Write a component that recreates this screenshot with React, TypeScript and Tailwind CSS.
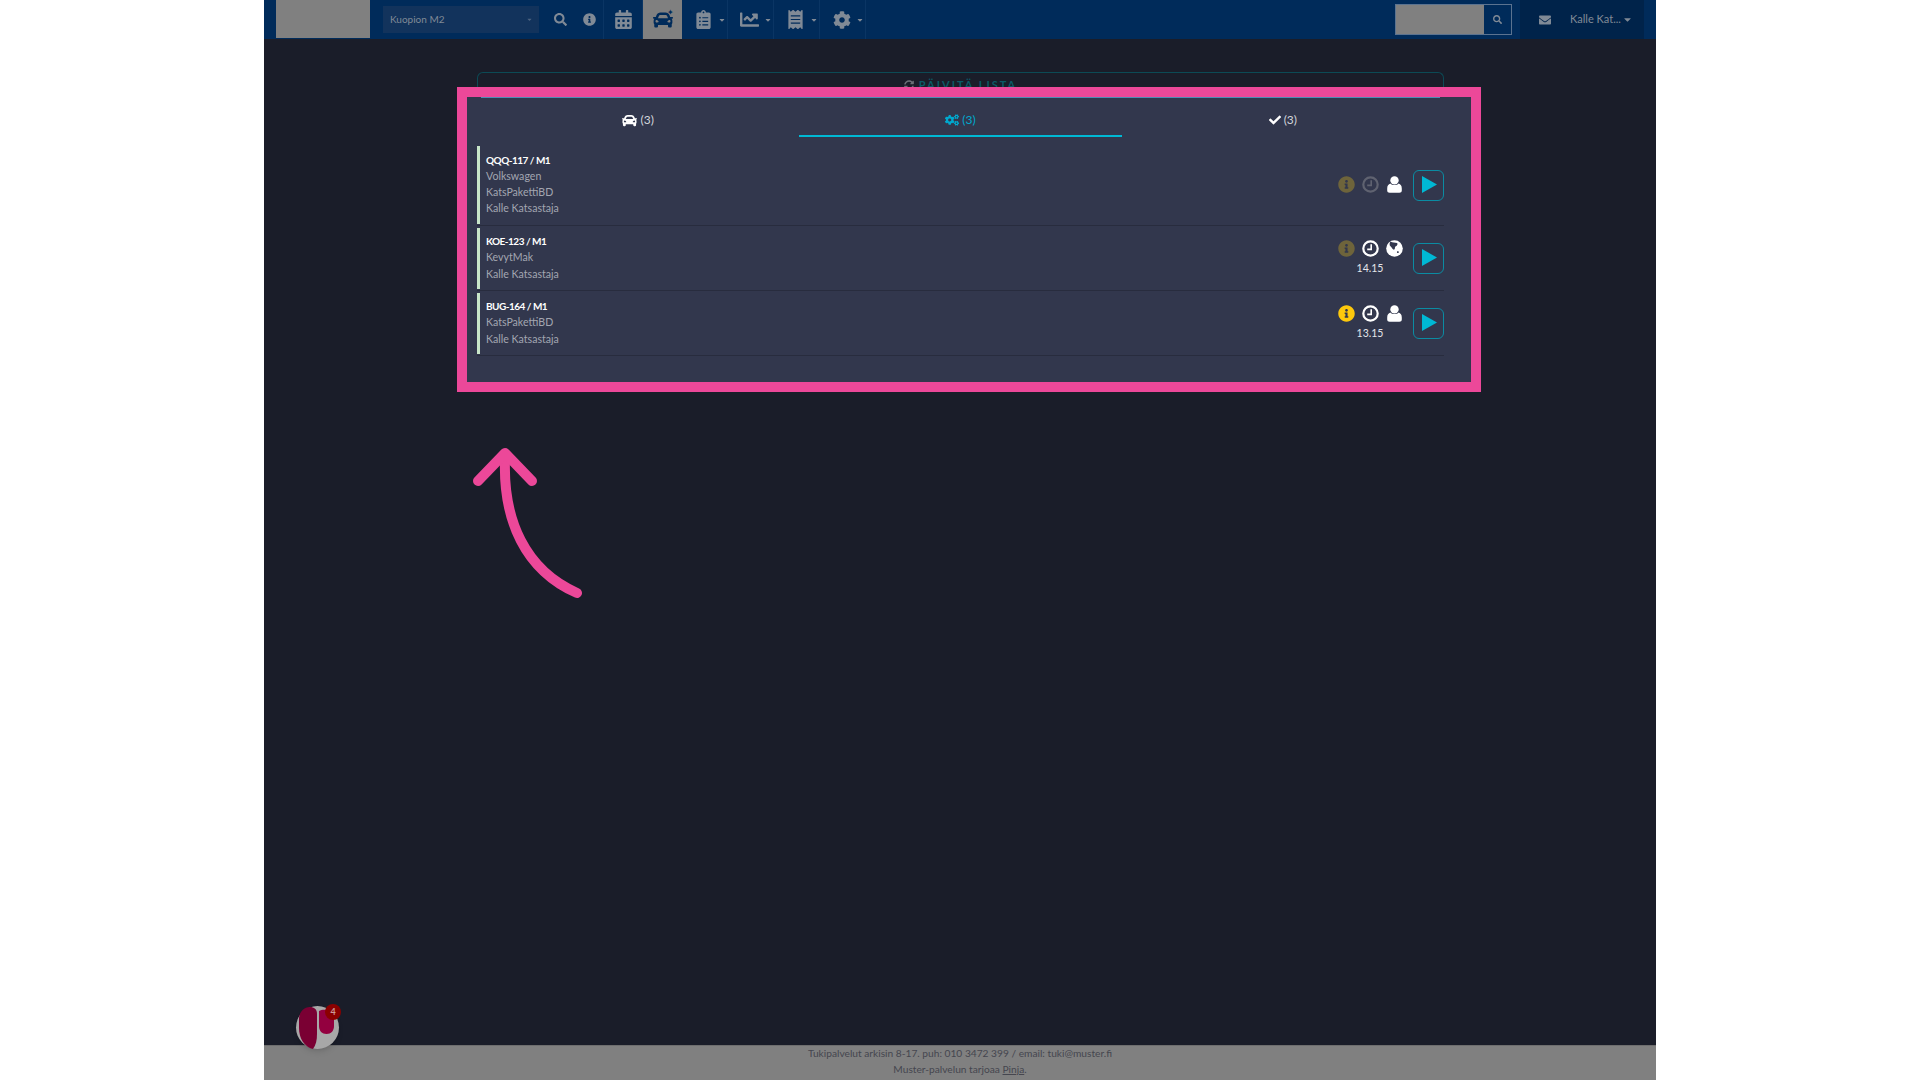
import { FaCalendarAlt, FaCar, FaCaretDown, FaChartLine, FaCheck, FaClipboardList, FaCog, FaCogs, FaEnvelope, FaInfoCircle, FaReceipt, FaSearch, FaSyncAlt } from "react-icons/fa"

const font = { fontFamily: "Lato, 'Noto Sans', sans-serif" }

type Job = {
  plate: string
  lines: string[]
  infoOn: boolean
  clockOn: boolean
  time?: string
  globe?: boolean
}

const jobs: Job[] = [
  { plate: "QQQ-117 / M1", lines: ["Volkswagen", "KatsPakettiBD", "Kalle Katsastaja"], infoOn: false, clockOn: false },
  { plate: "KOE-123 / M1", lines: ["KevytMak", "Kalle Katsastaja"], infoOn: false, clockOn: true, time: "14.15", globe: true },
  { plate: "BUG-164 / M1", lines: ["KatsPakettiBD", "Kalle Katsastaja"], infoOn: true, clockOn: true, time: "13.15" },
]

function NavDrop({ children }: { children: React.ReactNode }) {
  return (
    <div className="flex h-full w-[46px] items-center border-r border-[#0a3564] pl-[12px] text-[#808a96]">
      <span className="flex w-[19px] justify-center">{children}</span>
      <FaCaretDown className="ml-[5px] text-[8px]" />
    </div>
  )
}

function ClockIcon({ on }: { on: boolean }) {
  return (
    <svg className={on ? "h-[17px] w-[17px] text-white" : "h-[17px] w-[17px] text-[#5f6270]"} viewBox="0 0 17 17" fill="none" stroke="currentColor">
      <circle cx="8.5" cy="8.5" r="7.2" strokeWidth="2.2" />
      <path d="M9.2 4.2 V9.4 H5.2" strokeWidth="1.6" />
    </svg>
  )
}

function UserIcon() {
  return (
    <svg className="h-[17px] w-[15px] text-white" viewBox="0 0 15 17" fill="currentColor">
      <circle cx="7.5" cy="4.4" r="4.2" />
      <path d="M3.4 7.6 C5 9.6 10 9.6 11.6 7.6 C13.6 8.2 14.8 9.8 14.8 12.4 V14.6 C14.8 16 13.8 16.8 12.4 16.8 H2.6 C1.2 16.8 0.2 16 0.2 14.6 V12.4 C0.2 9.8 1.4 8.2 3.4 7.6 Z" />
    </svg>
  )
}

function GlobeIcon() {
  return (
    <svg className="h-[17px] w-[17px]" viewBox="0 0 17 17">
      <circle cx="8.5" cy="8.5" r="8.3" fill="#ffffff" />
      <path d="M4.5 1.6 C6.5 3 9 2.6 11 3 C12.4 4 10.6 6.4 9.2 6.6 C8.6 8 9.4 9.6 7.8 9.8 C6 8.8 5.6 6.8 3.8 5.4 C3.4 4 3.8 2.6 4.5 1.6 Z" fill="#32374d" />
      <path d="M11 11.4 C12.4 10.8 13.2 11.6 12.6 12.8 C11.8 13.6 10.6 12.8 11 11.4 Z" fill="#32374d" />
    </svg>
  )
}

function Header() {
  return (
    <header className="flex h-[39px] shrink-0 items-center bg-[#002b5a] text-[#808a96]">
      <div className="ml-[12px] h-[38px] w-[94px] self-start bg-[#808080]" />
      <div className="ml-[13px] flex h-[27px] w-[156px] items-center justify-between bg-[#12335c] pl-[7px] pr-[6px] text-[10px] text-[#808a96]">
        <span>Kuopion M2</span>
        <FaCaretDown className="text-[7px] text-[#4e6480]" />
      </div>
      <FaSearch className="ml-[15px] text-[13px]" />
      <FaInfoCircle className="ml-[16px] text-[13px]" />
      <div className="ml-[7px] flex h-full w-[40px] items-center justify-center border-x border-[#0a3564]">
        <FaCalendarAlt className="text-[19px]" />
      </div>
      <div className="relative flex h-full w-[39px] items-center justify-center bg-[#808080] text-[#002b5a]">
        <FaCar className="text-[20px]" />
        <span className="absolute right-[8px] top-[8px] text-[8px] leading-none">✦</span>
      </div>
      <NavDrop><FaClipboardList className="text-[19px]" /></NavDrop>
      <NavDrop><FaChartLine className="text-[19px]" /></NavDrop>
      <NavDrop><FaReceipt className="text-[19px]" /></NavDrop>
      <NavDrop><FaCog className="text-[18px]" /></NavDrop>
      <div className="flex-1" />
      <div className="flex h-[31px] w-[117px] border border-[#5b7390]">
        <div className="flex-1 bg-[#808080]" />
        <div className="flex w-[27px] items-center justify-center">
          <FaSearch className="text-[9px]" />
        </div>
      </div>
      <div className="ml-[8px] flex h-full w-[124px] items-center bg-[#00234a] pl-[19px] text-[11px]">
        <FaEnvelope className="text-[12px]" />
        <span className="ml-[19px]">Kalle Kat...</span>
        <FaCaretDown className="ml-[1px] text-[11px]" />
      </div>
      <div className="w-[12px] bg-[#00305f]" />
    </header>
  )
}

function JobRow({ job, first }: { job: Job; first: boolean }) {
  return (
    <div className="mb-[2px] border-b border-[#282c3e] pb-[1px]">
      <div className={first ? "flex items-center justify-between border-l-[3px] border-[#c8e6c9] py-[6.5px] pl-[6px]" : "flex items-center justify-between border-l-[3px] border-[#c8e6c9] py-[6px] pl-[6px]"}>
        <div className="-mt-[1px] mb-[1px] text-[10.6px] leading-[16.3px] text-[#a3a6b1]">
          <div className="text-[10px] font-bold tracking-[-0.5px] text-white">{job.plate}</div>
          {job.lines.map((l, i) => (
            <div key={i}>{l}</div>
          ))}
        </div>
        <div className="flex items-center">
          <div className="mb-[2px] grid grid-cols-[24px_24px_24px] items-center justify-items-center text-white">
            <FaInfoCircle className={job.infoOn ? "text-[17px] text-[#fdc80c]" : "text-[17px] text-[#6e643b]"} />
            <ClockIcon on={job.clockOn} />
            {job.globe ? <GlobeIcon /> : <UserIcon />}
            {job.time && (
              <div className="col-start-2 mt-[4px] text-[10.5px] leading-[14px] text-[#e4e6ea]">{job.time}</div>
            )}
          </div>
          <button className="ml-[7px] flex h-[31px] w-[31px] items-center justify-center rounded-[6px] border border-[#0b8ca3]">
            <svg className="mb-[2px] ml-[1px] h-[17px] w-[15px]" viewBox="0 0 15 17">
              <polygon points="0,0 15,8.5 0,17" fill="#00b8d4" />
            </svg>
          </button>
        </div>
      </div>
    </div>
  )
}

export default function App() {
  return (
    <div className="h-screen bg-white" style={font}>
      <div className="relative mx-auto flex h-full w-[1392px] flex-col overflow-hidden bg-[#1a1d29]">
        <Header />
        <main className="flex-1">
          <div className="ml-[213px] mt-[33px] flex h-[30px] w-[967px] justify-center rounded-t-[6px] border border-b-0 border-[#0c4a55] pt-[4px] text-[11px] font-bold tracking-[2px] text-[#0b5a66]">
            <span className="flex h-[16px] items-center gap-[5px]">
              <FaSyncAlt className="text-[10px] text-[#6b6e76]" />
              PÄIVITÄ LISTA
            </span>
          </div>
          <section className="relative ml-[193px] mt-[-15px] h-[305px] w-[1024px] border-[10px] border-[#ec4899] bg-[#32374d] pl-[10px] pr-[27px]">
            <div className="mx-[4px] h-px bg-[#4f8db5]" />
            <div className="grid h-[39px] grid-cols-3 text-[12px] text-[#d3d5da]">
              <div className="flex items-center justify-center gap-[3px] pt-[5px]">
                <FaCar className="text-[15px] text-white" /> (3)
              </div>
              <div className="flex items-center justify-center gap-[3px] border-b-2 border-[#00b8d4] pt-[7px] text-[#00a9cf]">
                <FaCogs className="text-[14px]" /> (3)
              </div>
              <div className="flex items-center justify-center gap-[3px] pt-[5px]">
                <FaCheck className="text-[12px] text-white" /> (3)
              </div>
            </div>
            <div className="mt-[9px]">
              {jobs.map((job, i) => (
                <JobRow key={job.plate} job={job} first={i === 0} />
              ))}
            </div>
          </section>
        </main>
        <footer className="h-[35px] shrink-0 border-t border-[#6e6e6e] bg-[#808080] text-center text-[10.2px] leading-[15.5px] text-[#45464f]">
          <div>Tukipalvelut arkisin 8-17. puh: 010 3472 399 / email: tuki@muster.fi</div>
          <div>
            Muster-palvelun tarjoaa <span className="underline">Pinja</span>.
          </div>
        </footer>

        {/* annotation arrow */}
        <svg className="absolute left-[206px] top-[440px] h-[165px] w-[120px]" viewBox="0 0 120 165" fill="none" stroke="#ec4899" strokeWidth="10" strokeLinecap="round" strokeLinejoin="round">
          <path d="M35 20 C33 80 55 130 107 153" />
          <path d="M8 41 L35 13 L62 41" />
        </svg>

        {/* chat bubble */}
        <div className="absolute bottom-[31px] left-[32px] h-[43px] w-[43px] rounded-full bg-[#a8a8a8] shadow-md">
          <svg className="absolute inset-0" viewBox="0 0 43 43">
            <path d="M3 13 C3 6 8 1 14 1 C18 1 21 3 21 8 V28 C21 34 20 39 17 43 C8 41 3 32 3 22 Z" fill="#7a0033" />
            <path d="M23 5 C27 3 33 3 38 8 V20 C38 25 35 28 30.5 28 C26 28 23 25 23 20 Z" fill="#93003f" />
          </svg>
          <div className="absolute right-[-2px] top-[-2px] flex h-[16px] w-[16px] items-center justify-center rounded-full bg-[#8b0000] text-[9px] font-bold text-[#cc9999]">
            4
          </div>
        </div>
      </div>
    </div>
  )
}
